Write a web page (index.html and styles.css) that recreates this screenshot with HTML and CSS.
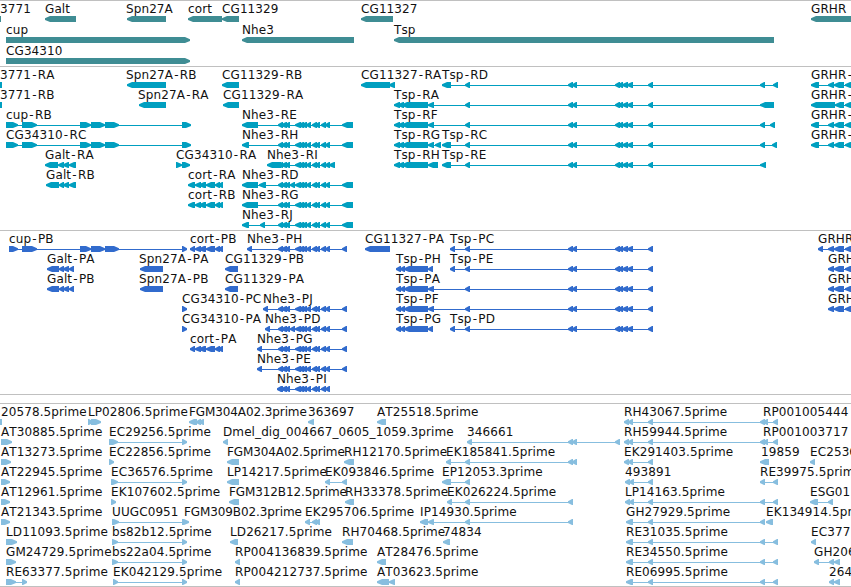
FILE: index.html
```html
<!DOCTYPE html>
<html lang="en">
<head>
<meta charset="utf-8">
<title>Genome browser</title>
<link rel="stylesheet" href="styles.css">
</head>
<body>
<main class="browser">
  <section class="track track-gene" id="gene"></section>
  <section class="track track-transcript" id="transcript"></section>
  <section class="track track-protein" id="protein"></section>
  <section class="track track-empty"></section>
  <section class="track track-est" id="est"></section>
</main>
<script src="tracks.js"></script>
</body>
</html>
```
FILE: styles.css
```css
body {
  margin: 0;
  background: #fff;
  overflow: hidden;
}
.browser {
  display: flex;
  flex-direction: column;
  height: 587px;
  box-sizing: border-box;
  border-bottom: 1px solid #c0c0c0;
}
.track {
  box-sizing: border-box;
  border-top: 1px solid #c0c0c0;
  overflow: hidden;
}
.track-gene { height: 66px; color: #3f8d94; }
.track-transcript { height: 164px; color: #009fc0; }
.track-protein { height: 164px; color: #316bcd; }
.track-empty { height: 9px; }
.track-est { height: 183px; color: #87bedf; }
.features {
  display: block;
  width: 100%;
  height: 100%;
}
.label {
  font: 12px "DejaVu Sans", sans-serif;
  font-kerning: none;
  letter-spacing: 0.1px;
  fill: #111;
}
.label-tight { letter-spacing: -0.1px; }
.exon { fill: currentColor; }
.intron {
  fill: currentColor;
  shape-rendering: crispEdges;
}
```
FILE: tracks.js
```js
// Shared exon runs
const RUNS = {
  T: '568,573 572,577 615,620 618,623 622,628 627,633 648,653',
  N: '278,283 281,287 285,290 295,301 298,304 301,307 306,311 312,317 315,320 321,326 325,330',
  CUP: '6,18 22,37 80,91 91,105 105,119 182,191',
  TS: '394,400 398,404 402,428',
  TP: '396,401 400,405 404,428',
  CR: '188,195 195,201 199,206 206,215 215,220 218,223',
  CP: '190,195 195,201 199,206 206,215 215,220 218,223',
  G: '828,834 834,844 845,857',
  R: '624,629 628,633 648,653',
  S: '625,630 629,634 648,653',
  E: '760,765 773,778'
};

// Feature: label, label x, strand, exons
const TRACKS = {
  gene: { base: 12, glyph: 15, pitch: 21, rows: [
    '3771 0 < -9,1|Galt 45 < 45,76|Spn27A 126 < 127,166|cort 188 < 188,222|CG11329 222 < 222,239|CG11327 361 < 361,393|GRHR 811 < 811,870',
    'cup 6 > 6,190|Nhe3 242 < 242,354|Tsp 394 < 394,774',
    'CG34310 6 > 6,190'
  ]},
  transcript: { base: 12, glyph: 15, pitch: 20, rows: [
    '3771-RA 0 < -5,2|Spn27A-RB 126 < 127,166|CG11329-RB 222 < 222,239|CG11327-RA 361 < 361,390 389,395|Tsp-RD 442 < 442,451 465,470 T 760,765 773,778|GRHR- 811 < 811,819 G',
    '3771-RB 0 < -5,2|Spn27A-RA 138 < 139,166|CG11329-RA 223 < 223,239|Tsp-RA 394 < TS 428,434 465,470 T 760,774|GRHR- 811 < 811,835 835,844 845,857',
    'cup-RB 6 > CUP|Nhe3-RE 242 < 242,258 N 342,353|Tsp-RF 394 < TS 428,434 465,470 T 760,765 770,775|GRHR- 811 < 811,819 G',
    'CG34310-RC 6 > CUP|Nhe3-RH 242 < 242,249 N 342,353|Tsp-RG 394 < TS 428,434 435,441|Tsp-RC 442 < 442,451 465,470 T 760,765 772,777|GRHR- 811 < 811,819 G',
    'Galt-RA 45 < 45,58 58,64 63,69 69,76|CG34310-RA 176 > 176,182 182,190|Nhe3-RI 267 < 267,281 N 329,335|Tsp-RH 394 < TS 428,438|Tsp-RE 442 < 442,451 465,470 T 760,766',
    'Galt-RB 46 < 46,59 59,64 63,69 69,76|cort-RA 188 < CR|Nhe3-RD 242 < 242,258 259,266 N 290,295 342,353',
    'cort-RB 188 < CR|Nhe3-RG 242 < 242,258 N 342,353',
    'Nhe3-RJ 242 < 242,249 260,265 N 342,353'
  ]},
  protein: { base: 12, glyph: 15, pitch: 20, rows: [
    'cup-PB 9 > 9,18 22,37 80,91 91,105 105,119 182,187|cort-PB 190 < CP|Nhe3-PH 247 < 247,252 N 342,347|CG11327-PA 365 < 365,390|Tsp-PC 450 < 450,455 465,470 T|GRHR 818 < 818,823 G',
    'Galt-PA 47 < 47,59 59,64 63,69 69,74|Spn27A-PA 139 < 140,163|CG11329-PB 225 < 225,238|Tsp-PH 396 < TP 428,433|Tsp-PE 450 < 450,455 465,470 T|GRH 828 < G',
    'Galt-PB 47 < 47,59 59,64 63,69 69,74|Spn27A-PB 139 < 140,163|CG11329-PA 225 < 225,238|Tsp-PA 396 < TP 428,434 465,470 T|GRH 828 < G',
    'CG34310-PC 182 > 182,187|Nhe3-PJ 263 < 263,268 N 342,347|Tsp-PF 396 < TP 428,434 465,470 T|GRH 828 < G',
    'CG34310-PA 182 > 182,187|Nhe3-PD 265 < 265,270 N 290,295 342,347|Tsp-PG 396 < TP 428,433|Tsp-PD 450 < 450,455 465,470 T',
    'cort-PA 190 < CP|Nhe3-PG 257 < 257,262 N 342,347',
    'Nhe3-PE 257 < 257,262 N 342,347',
    'Nhe3-PI 277 < 277,282 N'
  ]},
  est: { base: 12, glyph: 15, pitch: 20, rows: [
    '20578.5prime 1 < -5,2|LP02806.5prime 88 > 88,93 91,101|FGM304A02.3prime 189 < 189,197 196,201 199,204|363697 308 < 308,314|AT25518.5prime 377 < 377,386|RH43067.5prime 624 < R 760,765 763,768 773,778|RP001005444 763 <',
    'AT30885.5prime 1 > 1,12|EC29256.5prime 109 > 109,118 182,187|Dmel_dig_004667_0605_1059.3prime 223 < 223,228|346661 467 < 467,472 568,573 572,577 615,620|RH59944.5prime 624 < R 760,765 763,768 773,778|RP001003717 763 <',
    'AT13273.5prime 1 > 1,11|EC22856.5prime 109 > 109,114|FGM304A02.5prime 227 < 227,239|RH12170.5prime 344 < 344,354|EK185841.5prime 446 < 446,451 465,470 568,573 572,577|EK291403.5prime 624 < R|19859 761 < 760,769|EC2536 810 < 810,815',
    'AT22945.5prime 1 > 1,10|EC36576.5prime 111 > 111,118 182,187|LP14217.5prime 227 < 227,239|EK093846.5prime 325 < 325,330 342,347|EP12053.3prime 442 < 442,451 465,470|493891 625 < S|RE39975.5prime 760 < E',
    'AT12961.5prime 1 > 1,10|EK107602.5prime 111 > 111,116|FGM312B12.5prime 229 < 229,239|RH33378.5prime 345 < 345,354|EK026224.5prime 447 < 447,452 465,470 568,573|LP14163.5prime 625 < S E|ESG011 810 < 810,818 828,833',
    'AT21343.5prime 1 > 1,10|UUGC0951 112 > 112,119 182,189|FGM309B02.3prime 184 <|EK295706.5prime 305 < 305,310 312,317 315,320|IP14930.5prime 420 < 420,428 428,434 465,470 568,573|GH27929.5prime 626 < 626,633 648,653 760,765|EK134914.5prime 766 < 766,773',
    'LD11093.5prime 6 > 6,17|bs82b12.5prime 112 > 112,118 182,187|LD26217.5prime 230 < 230,238|RH70468.5prime 342 < 342,353|74834 443 < 443,450|RE31035.5prime 626 < 626,633 648,653 E|EC377 811 < 811,816',
    'GM24729.5prime 6 > 6,16|bs22a04.5prime 112 > 112,118 182,187|RP004136839.5prime 235 < 235,240|AT28476.5prime 377 < 377,386|RE34550.5prime 626 < 626,633 648,653 E|GH206 814 < 814,819 829,834 834,840',
    'RE63377.5prime 6 > 6,16 22,27|EK042129.5prime 113 > 113,118 182,187|RP004212737.5prime 235 < 235,240|AT03623.5prime 377 < 377,389 389,395|RE06995.5prime 626 < 626,633 648,653 E|264 829 < 829,834 834,840'
  ]}
};

const NS = 'http://www.w3.org/2000/svg';

function add(parent, tag, attrs) {
  const node = document.createElementNS(NS, tag);
  for (const key in attrs) node.setAttribute(key, attrs[key]);
  parent.appendChild(node);
  return node;
}

// Blunt-tipped arrow; the head takes up to 5px of the exon
function exonPath(s, e, y, strand) {
  const head = Math.min(5, e - s - 1);
  return strand === '<'
    ? `M${s} ${y + 2.3}L${s + head} ${y}H${e}V${y + 6}H${s + head}L${s} ${y + 4}Z`
    : `M${e} ${y + 2.3}L${e - head} ${y}H${s}V${y + 6}H${e - head}L${e} ${y + 4}Z`;
}

for (const [id, track] of Object.entries(TRACKS)) {
  const svg = add(document.getElementById(id), 'svg', { class: 'features' });
  track.rows.forEach((row, i) => {
    const y = track.glyph + i * track.pitch;
    for (const feature of row.split('|')) {
      const [name, x, strand, ...parts] = feature.split(' ');
      const exons = parts.flatMap(p => (RUNS[p] || p).split(' '))
        .map(p => p.split(',').map(Number));
      if (exons.length) {
        const start = Math.min(...exons.map(e => e[0]));
        const end = Math.max(...exons.map(e => e[1]));
        add(svg, 'rect', { class: 'intron', x: start + 1, y: y + 3, width: end - start - 2, height: 1 });
        for (const [s, e] of exons) {
          add(svg, 'path', { class: 'exon', d: exonPath(s, e, y, strand) });
        }
      }
      const attrs = {
        class: name.startsWith('FGM') ? 'label label-tight' : 'label',
        x,
        y: track.base + i * track.pitch
      };
      // Open a little room on both sides of the isoform hyphen
      if (name.includes('-')) {
        attrs.dx = [...name].map((c, k) => c === '-' || name[k - 1] === '-' ? 1.2 : 0).join(' ');
      }
      add(svg, 'text', attrs).textContent = name;
    }
  });
}
```
